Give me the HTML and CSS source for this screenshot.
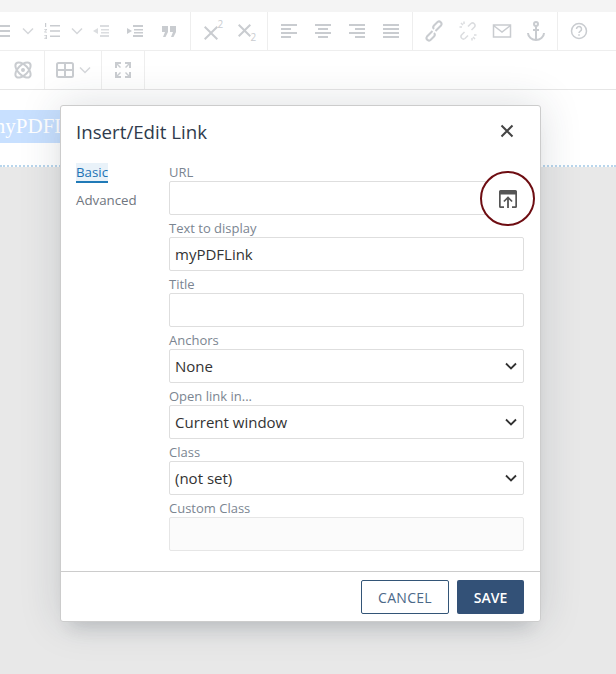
FILE: index.html
```html
<!DOCTYPE html>
<html lang="en">
<head>
<meta charset="utf-8">
<title>Insert/Edit Link</title>
<link rel="stylesheet" href="styles.css">
</head>
<body>
<div class="page">
  <div class="topstrip"></div>
  <div class="toolbar">
    <div class="row row-first">
      <div class="group group-cut">
        <span class="btn"><svg width="24" height="24" viewBox="0 0 24 24" class="ic"><path d="M5 6h14v2H5zM5 11h14v2H5zM5 16h14v2H5z"/></svg></span>
        <span class="caret"><svg width="12" height="8" viewBox="0 0 12 8" class="chev"><path d="M1 1.500l5 5 5-5"/></svg></span>
        <span class="btn"><svg width="24" height="24" viewBox="0 0 24 24" class="ic"><path d="M10 6h10v1.600H10zM10 11.200h10v1.600H10zM10 16.400h10v1.600H10z"/><path d="M5 4h1.200v4H5zM4.300 10h2.700v.8l-1.800 2h1.800v.8H4.300v-.8l1.800-2H4.300zM4.300 16h2.700v4H4.300v-.8h1.900v-.8H4.800v-.7h1.400v-.9H4.300z"/></svg></span>
        <span class="caret"><svg width="12" height="8" viewBox="0 0 12 8" class="chev"><path d="M1 1.500l5 5 5-5"/></svg></span>
        <span class="btn dim"><svg width="24" height="24" viewBox="0 0 24 24" class="ic"><path d="M11 6h9v2h-9zM12 10h8v1.500h-8zM12 13h8v1.500h-8zM11 16h9v2h-9zM9 9l-5 3 5 3z"/></svg></span>
        <span class="btn"><svg width="24" height="24" viewBox="0 0 24 24" class="ic"><path d="M10 6h10v2H10zM11 10h9v1.500h-9zM11 13h9v1.500h-9zM10 16h10v2H10zM4 9l5 3-5 3z"/></svg></span>
        <span class="btn"><svg width="24" height="24" viewBox="0 0 24 24" class="ic"><path d="M5 7h6v6l-2.500 5H6l2-5H5zM13 7h6v6l-2.500 5H14l2-5h-3z"/></svg></span>
      </div>
      <div class="group">
        <span class="btn"><svg width="24" height="24" viewBox="0 0 24 24" class="ic"><path d="M4 8.400L5.400 7 11 12.600 16.600 7 18 8.400 12.400 14 18 19.600 16.600 21 11 15.400 5.400 21 4 19.600 9.600 14z"/><text x="17.500" y="9" class="sup">2</text></svg></span>
        <span class="btn"><svg width="24" height="24" viewBox="0 0 24 24" class="ic"><path d="M4 6.400L5.400 5 10.500 10.100 15.600 5 17 6.400 11.900 11.500 17 16.600 15.600 18 10.500 12.900 5.400 18 4 16.600 9.100 11.500z"/><text x="16.500" y="22" class="sup">2</text></svg></span>
      </div>
      <div class="group">
        <span class="btn"><svg width="24" height="24" viewBox="0 0 24 24" class="ic"><path d="M4 5h16v2H4zM4 9h10v2H4zM4 13h16v2H4zM4 17h10v2H4z"/></svg></span>
        <span class="btn"><svg width="24" height="24" viewBox="0 0 24 24" class="ic"><path d="M4 5h16v2H4zM7 9h10v2H7zM4 13h16v2H4zM7 17h10v2H7z"/></svg></span>
        <span class="btn"><svg width="24" height="24" viewBox="0 0 24 24" class="ic"><path d="M4 5h16v2H4zM10 9h10v2H10zM4 13h16v2H4zM10 17h10v2H10z"/></svg></span>
        <span class="btn"><svg width="24" height="24" viewBox="0 0 24 24" class="ic"><path d="M4 5h16v2H4zM4 9h16v2H4zM4 13h16v2H4zM4 17h16v2H4z"/></svg></span>
      </div>
      <div class="group">
        <span class="btn"><svg width="24" height="24" viewBox="0 0 24 24" class="line thick"><path d="M10.500 12l-5.500 5.500a2.500 2.500 0 0 0 3.500 3.500l3.500-3.500a2.500 2.500 0 0 0 0-3.500"/><path d="M13.500 12l5.500-5.500a2.500 2.500 0 0 0-3.500-3.500L12 6.500a2.500 2.500 0 0 0 0 3.500"/></svg></span>
        <span class="btn dim"><svg width="24" height="24" viewBox="0 0 24 24" class="line"><path d="M8.500 13l-3 3a2.500 2.500 0 0 0 3.500 3.500l3-3M15.500 11l3-3A2.500 2.500 0 0 0 15 4.500l-3 3M5 4l2 2M3.500 8h2.500M8 2.500V5M19 20l-2-2M20.500 16H18M16 21.500V19"/></svg></span>
        <span class="btn"><svg width="24" height="24" viewBox="0 0 24 24" class="line"><path d="M3.500 6h17v12h-17zM3.500 6.500L12 13l8.500-6.500"/></svg></span>
        <span class="btn"><svg width="24" height="24" viewBox="0 0 24 24" class="line thick"><circle cx="12" cy="5" r="2"/><path d="M12 7v14M9 11h6M4 14c0 4 4 7 8 7s8-3 8-7"/></svg></span>
      </div>
      <div class="group group-last">
        <span class="btn"><svg width="24" height="24" viewBox="0 0 24 24" class="line"><circle cx="12" cy="12" r="7.500"/><path d="M9.500 10a2.500 2.500 0 1 1 3.800 2.100c-.8.500-1.300 1-1.300 2M12 15.300v1.400"/></svg></span>
      </div>
    </div>
    <div class="row">
      <div class="group group-atom">
        <span class="btn"><svg width="24" height="24" viewBox="0 0 24 24" class="line thick"><circle cx="12" cy="12" r="1"/><ellipse cx="12" cy="12" rx="9.500" ry="5" transform="rotate(45 12 12)"/><ellipse cx="12" cy="12" rx="9.500" ry="5" transform="rotate(-45 12 12)"/></svg></span>
      </div>
      <div class="group">
        <span class="btn btn-table"><svg width="24" height="24" viewBox="0 0 24 24" class="line thick"><rect x="4" y="5" width="16" height="14" rx="1.500"/><path d="M4 12h16M12 5v14"/></svg></span>
        <span class="caret caret-table"><svg width="12" height="8" viewBox="0 0 12 8" class="chev"><path d="M1 1.500l5 5 5-5"/></svg></span>
      </div>
      <div class="group">
        <span class="btn"><svg width="24" height="24" viewBox="0 0 24 24" class="ic"><path d="M4 4h6v2H7l3 3-1 1-3-3v3H4zM20 4v6h-2V7l-3 3-1-1 3-3h-3V4zM4 20v-6h2v3l3-3 1 1-3 3h3v2zM20 20h-6v-2h3l-3-3 1-1 3 3v-3h2z"/></svg></span>
      </div>
    </div>
  </div>
  <div class="editor">
    <span class="selected">myPDFLink</span>
  </div>
  <div class="backdrop"></div>

  <div class="dialog">
    <div class="dialog-head">
      <span class="dialog-title">Insert/Edit Link</span>
      <svg class="close" width="16" height="16" viewBox="0 0 16 16"><path d="M2.500 2.500l11 11M13.500 2.500l-11 11"/></svg>
    </div>
    <div class="dialog-body">
      <nav class="tabs">
        <span class="tab tab-active">Basic</span>
        <span class="tab">Advanced</span>
      </nav>
      <div class="fields">
        <label class="field"><span class="label">URL</span><input class="input" type="text"></label>
        <label class="field"><span class="label">Text to display</span><input class="input" type="text" value="myPDFLink"></label>
        <label class="field"><span class="label">Title</span><input class="input" type="text"></label>
        <label class="field"><span class="label">Anchors</span><select class="input select"><option>None</option></select></label>
        <label class="field"><span class="label">Open link in...</span><select class="input select"><option>Current window</option></select></label>
        <label class="field"><span class="label">Class</span><select class="input select"><option>(not set)</option></select></label>
        <label class="field"><span class="label">Custom Class</span><input class="input input-disabled" type="text" disabled></label>
      </div>
    </div>
    <div class="dialog-foot">
      <span class="button button-outline">CANCEL</span>
      <span class="button button-solid">SAVE</span>
    </div>
  </div>

  <div class="callout">
    <svg width="22" height="22" viewBox="0 0 22 22"><path class="picker" fill-rule="evenodd" d="M3.500 2h15A1.500 1.500 0 0 1 20 3.500v15a1.500 1.500 0 0 1-1.500 1.500H15v-1.700h3.300V6.500H3.700v11.800H7V20H3.500A1.500 1.500 0 0 1 2 18.500v-15A1.500 1.500 0 0 1 3.500 2z"/><path class="picker" d="M11 8.200l4.700 4.700-1.200 1.200-2.600-2.600V20h-1.800v-8.500l-2.600 2.600-1.200-1.200z"/></svg>
  </div>
</div>
</body>
</html>
```

FILE: styles.css
```css
* { box-sizing: border-box; }
html, body { margin: 0; padding: 0; }
body { font-family: "Open Sans", "Noto Sans", sans-serif; background: #fff; }
.page { position: relative; width: 616px; height: 674px; overflow: hidden; display: flex; flex-direction: column; background: #e9e9e9; }
.topstrip { height: 12px; background: #f4f4f4; }
.toolbar { background: #fff; border-bottom: 1px solid #e6e6e6; }
.row { display: flex; height: 39px; border-bottom: 1px solid #eeeeee; }
.row:last-child { height: 38px; border-bottom: 0; }
.row-first { margin-left: -14px; width: 630px; }
.group { display: flex; align-items: center; padding: 0 4px; border-right: 1px solid #eeeeee; height: 100%; }
.group-cut { padding-left: 0; }
.group-last { border-right: 0; }
.group-atom { padding-left: 6px; }
.btn { width: 34px; height: 34px; display: flex; align-items: center; justify-content: center; flex: none; }
.btn-table { width: 32px; }
.caret { width: 15px; display: flex; align-items: center; justify-content: center; flex: none; }
.caret-table { width: 12px; margin-left: -2px; margin-right: 6px; }
.ic { fill: #c9ccd0; }
.dim { opacity: .65; }
.chev { fill: none; stroke: #d5d7da; stroke-width: 1.500; }
.line { fill: none; stroke: #c9ccd0; stroke-width: 1.500; }
.thick { stroke-width: 2; }
.sup { font-family: "Open Sans", sans-serif; font-size: 10px; fill: #c9ccd0; stroke: none; }

.editor { height: 77px; background: #fff; border-bottom: 2px dotted #b9d6ec; padding-top: 20px; overflow: hidden; }
.selected { display: inline-block; height: 33px; line-height: 33px; padding-right: 20px; margin-left: -11px; background: #c8e0ff; color: #fff; font-family: "Liberation Serif", serif; font-size: 21px; }
.backdrop { flex: 1; background: #e8e8e8; }

.dialog { position: absolute; left: 60px; top: 105px; width: 481px; height: 517px; background: #fff; border: 1px solid #cccccc; border-radius: 3px; display: flex; flex-direction: column; box-shadow: 0 16px 16px -10px rgba(34,47,62,.15), 0 0 40px 1px rgba(34,47,62,.15); }
.dialog-head { height: 53px; flex: none; padding: 0 25px 0 15px; display: flex; align-items: center; justify-content: space-between; }
.dialog-title { font-size: 18.700px; color: #2f3b4c; margin-top: -2px; }
.close { fill: none; stroke: #444; stroke-width: 2; margin-top: -4px; }
.dialog-body { display: flex; padding: 0 16px 20px 15px; border-bottom: 1px solid #cccccc; flex: 1; }
.tabs { width: 93px; display: flex; flex-direction: column; align-items: flex-start; gap: 8px; padding-top: 4px; }
.tab { font-size: 13.300px; line-height: 18px; color: #6f7680; }
.tab-active { color: #2272b5; background: #e9f2f9; border-bottom: 2px solid #207ab7; }
.fields { flex: 1; display: flex; flex-direction: column; }
.field { display: flex; flex-direction: column; }
.label { height: 22px; line-height: 26px; font-size: 13px; color: #7b8591; }
.input { width: 100%; height: 34px; border: 1px solid #dedede; border-radius: 2px; padding: 0 5px; font-family: inherit; font-size: 15px; color: #333; background: #fff; outline: none; }
.select { appearance: none; padding: 0 5px; background-image: url("data:image/svg+xml,%3Csvg xmlns='http://www.w3.org/2000/svg' width='12' height='8'%3E%3Cpath d='M1 1.500l5 5 5-5' fill='none' stroke='%23333' stroke-width='1.800'/%3E%3C/svg%3E"); background-repeat: no-repeat; background-position: right 6px center; }
.input-disabled { background: #fbfbfb; border-color: #e6e6e6; }
.dialog-foot { height: 49px; flex: none; padding: 8px 16px 7px 0; display: flex; justify-content: flex-end; align-items: flex-start; gap: 8px; }
.button { height: 34px; display: flex; align-items: center; justify-content: center; border-radius: 2px; font-size: 14px; }
.button-outline { width: 88px; border: 1px solid #335577; color: #4c6888; letter-spacing: .3px; }
.button-solid { width: 67px; background: #335177; color: #fff; font-weight: 600; }
.callout { position: absolute; left: 480px; top: 171px; width: 55px; height: 55px; border-radius: 50%; border: 2.500px solid #6e0d12; background: #fff; display: flex; align-items: center; justify-content: center; }
.picker { fill: #555; }
```
